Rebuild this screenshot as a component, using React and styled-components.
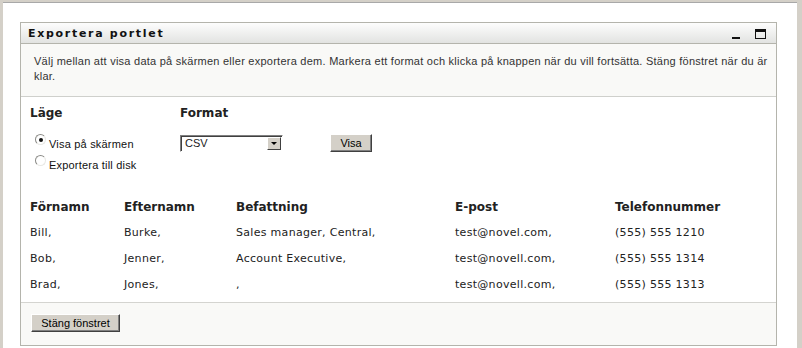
import React from 'react';
import styled, { createGlobalStyle } from 'styled-components';

const Global = createGlobalStyle`
    html, body {
        margin: 0;
        padding: 0;
        background: #fff;
    }
`;

const Frame = styled.div`
    box-sizing: border-box;
    height: 348px;
    border-left: 3px solid #d4d0c8;
    border-top: 2px solid #d4d0c8;
    border-right: 5px solid #d4d0c8;
    box-shadow: inset 0 1px 0 #a8a8a8, inset -3px 0 0 #fff;
    position: relative;
    padding: 20px 20px 0 17px;
    background: #fff;
    overflow: hidden;

    &::after {
        content: '';
        position: absolute;
        top: -2px;
        bottom: 0;
        right: -5px;
        width: 3px;
        background: #6a6a6a;
    }
`;

const Portlet = styled.div`
    border: 1px solid #b4b4ac;
    background: #fff;
    font-family: "DejaVu Sans", Verdana, sans-serif;
    color: #222;
`;

const Header = styled.div`
    height: 20px;
    display: flex;
    align-items: center;
    justify-content: space-between;
    padding: 0 10px 0 7px;
    background: linear-gradient(#fdfdfd, #e2e3e1);
    border-bottom: 1px solid #b4b4ac;

    h2 {
        margin: 1px 0 0;
        font-size: 11px;
        font-weight: bold;
        letter-spacing: 1.7px;
        color: #111;
    }
`;

const Controls = styled.div`
    display: flex;
    align-items: center;
    gap: 15px;
`;

const Minimize = styled.span`
    display: block;
    width: 8px;
    height: 2px;
    background: #111;
    margin-top: 10px;
`;

const Maximize = styled.span`
    display: block;
    box-sizing: border-box;
    width: 11px;
    height: 10px;
    border: 1px solid #111;
    border-top-width: 3px;
    margin-top: 2px;
`;

const Description = styled.div`
    box-sizing: border-box;
    height: 53px;
    background: #f9f9f7;
    border-bottom: 1px solid #cfd0cc;
    padding: 10px 4px 0 13px;
    font-family: "Liberation Sans", Tahoma, sans-serif;
    font-size: 11px;
    letter-spacing: 0.25px;
    line-height: 15px;
    color: #333;
`;

const Form = styled.div`
    display: flex;
    padding: 9px 0 0 9px;
`;

const FieldGroup = styled.div`
    width: ${p => p.$width}px;
`;

const Label = styled.div`
    font-size: 12px;
    font-weight: bold;
    height: 16px;
    margin-bottom: 12px;
`;

const RadioRow = styled.label`
    display: flex;
    align-items: flex-start;
    gap: 3px;
    padding-left: 5px;
    height: 21px;
    font-family: "Liberation Sans", Tahoma, sans-serif;
    font-size: 11px;
    letter-spacing: 0.2px;
    color: #111;
`;

const RadioDot = styled.span`
    box-sizing: border-box;
    width: 11px;
    height: 11px;
    border-radius: 50%;
    border: 1px solid #8a8a86;
    border-right-color: #e8e8e4;
    border-bottom-color: #e8e8e4;
    background: #fff;
    display: flex;
    align-items: center;
    justify-content: center;

    &::after {
        content: '';
        width: 4px;
        height: 4px;
        border-radius: 50%;
        background: ${p => (p.$checked ? '#111' : 'transparent')};
    }
`;

const RadioText = styled.span`
    margin-top: 4px;
`;

const FormatRow = styled.div`
    display: flex;
    align-items: center;
    gap: 47px;
`;

const Select = styled.div`
    box-sizing: border-box;
    width: 103px;
    height: 17px;
    display: flex;
    align-items: center;
    justify-content: space-between;
    border: 1px solid #808080;
    border-right-color: #fff;
    border-bottom-color: #fff;
    box-shadow: inset 1px 1px 0 #404040;
    background: #fff;
    font-family: "Liberation Sans", Tahoma, sans-serif;
    font-size: 11px;
    padding: 0 1px 0 4px;
`;

const Arrow = styled.span`
    box-sizing: border-box;
    width: 14px;
    height: 13px;
    background: #d4d0c8;
    border: 1px solid #fff;
    border-right-color: #404040;
    border-bottom-color: #404040;
    display: flex;
    align-items: center;
    justify-content: center;

    &::after {
        content: '';
        border-left: 3px solid transparent;
        border-right: 3px solid transparent;
        border-top: 3px solid #000;
    }
`;

const Button = styled.button`
    box-sizing: border-box;
    display: block;
    height: 18px;
    padding: 0 8px;
    min-width: ${p => p.$min || 0}px;
    background: #d4d0c8;
    border: 1px solid #fff;
    border-right-color: #404040;
    border-bottom-color: #404040;
    box-shadow: inset -1px -1px 0 #808080;
    font-family: "Liberation Sans", Tahoma, sans-serif;
    font-size: 11px;
    color: #000;
    border-radius: 0;
`;

const Table = styled.table`
    border-collapse: collapse;
    margin: 19px 0 0 9px;
    font-size: 11px;
    letter-spacing: 0.3px;

    th {
        text-align: left;
        font-size: 12px;
        font-weight: bold;
        letter-spacing: 0;
        height: 24px;
        padding: 0;
        vertical-align: middle;
    }

    td {
        height: 26px;
        padding: 0;
        color: #222;
        vertical-align: middle;
    }
`;

const Col = styled.col`
    width: ${p => p.$w}px;
`;

const Footer = styled.div`
    margin-top: 5px;
    border-top: 1px solid #d4d4d0;
    background: #f9f9f7;
    padding: 11px 0 13px 10px;
`;

const people = [
    ['Bill,', 'Burke,', 'Sales manager, Central,', 'test@novel.com,', '(555) 555 1210'],
    ['Bob,', 'Jenner,', 'Account Executive,', 'test@novell.com,', '(555) 555 1314'],
    ['Brad,', 'Jones,', ',', 'test@novell.com,', '(555) 555 1313'],
];

export default function App() {
    return (
        <>
            <Global />
            <Frame>
                <Portlet>
                    <Header>
                        <h2>Exportera portlet</h2>
                        <Controls>
                            <Minimize />
                            <Maximize />
                        </Controls>
                    </Header>
                    <Description>
                        Välj mellan att visa data på skärmen eller exportera dem. Markera ett format och klicka på knappen när du vill fortsätta. Stäng fönstret när du är klar.
                    </Description>
                    <Form>
                        <FieldGroup $width={150}>
                            <Label>Läge</Label>
                            <RadioRow>
                                <RadioDot $checked />
                                <RadioText>Visa på skärmen</RadioText>
                            </RadioRow>
                            <RadioRow>
                                <RadioDot />
                                <RadioText>Exportera till disk</RadioText>
                            </RadioRow>
                        </FieldGroup>
                        <FieldGroup $width={300}>
                            <Label>Format</Label>
                            <FormatRow>
                                <Select>
                                    CSV
                                    <Arrow />
                                </Select>
                                <Button $min={42}>Visa</Button>
                            </FormatRow>
                        </FieldGroup>
                    </Form>
                    <Table>
                        <colgroup>
                            <Col $w={94} />
                            <Col $w={112} />
                            <Col $w={219} />
                            <Col $w={160} />
                            <Col $w={140} />
                        </colgroup>
                        <thead>
                            <tr>
                                <th>Förnamn</th>
                                <th>Efternamn</th>
                                <th>Befattning</th>
                                <th>E-post</th>
                                <th>Telefonnummer</th>
                            </tr>
                        </thead>
                        <tbody>
                            {people.map(row => (
                                <tr key={row[0]}>
                                    {row.map((cell, i) => (
                                        <td key={i}>{cell}</td>
                                    ))}
                                </tr>
                            ))}
                        </tbody>
                    </Table>
                    <Footer>
                        <Button $min={89}>Stäng fönstret</Button>
                    </Footer>
                </Portlet>
            </Frame>
        </>
    );
}
